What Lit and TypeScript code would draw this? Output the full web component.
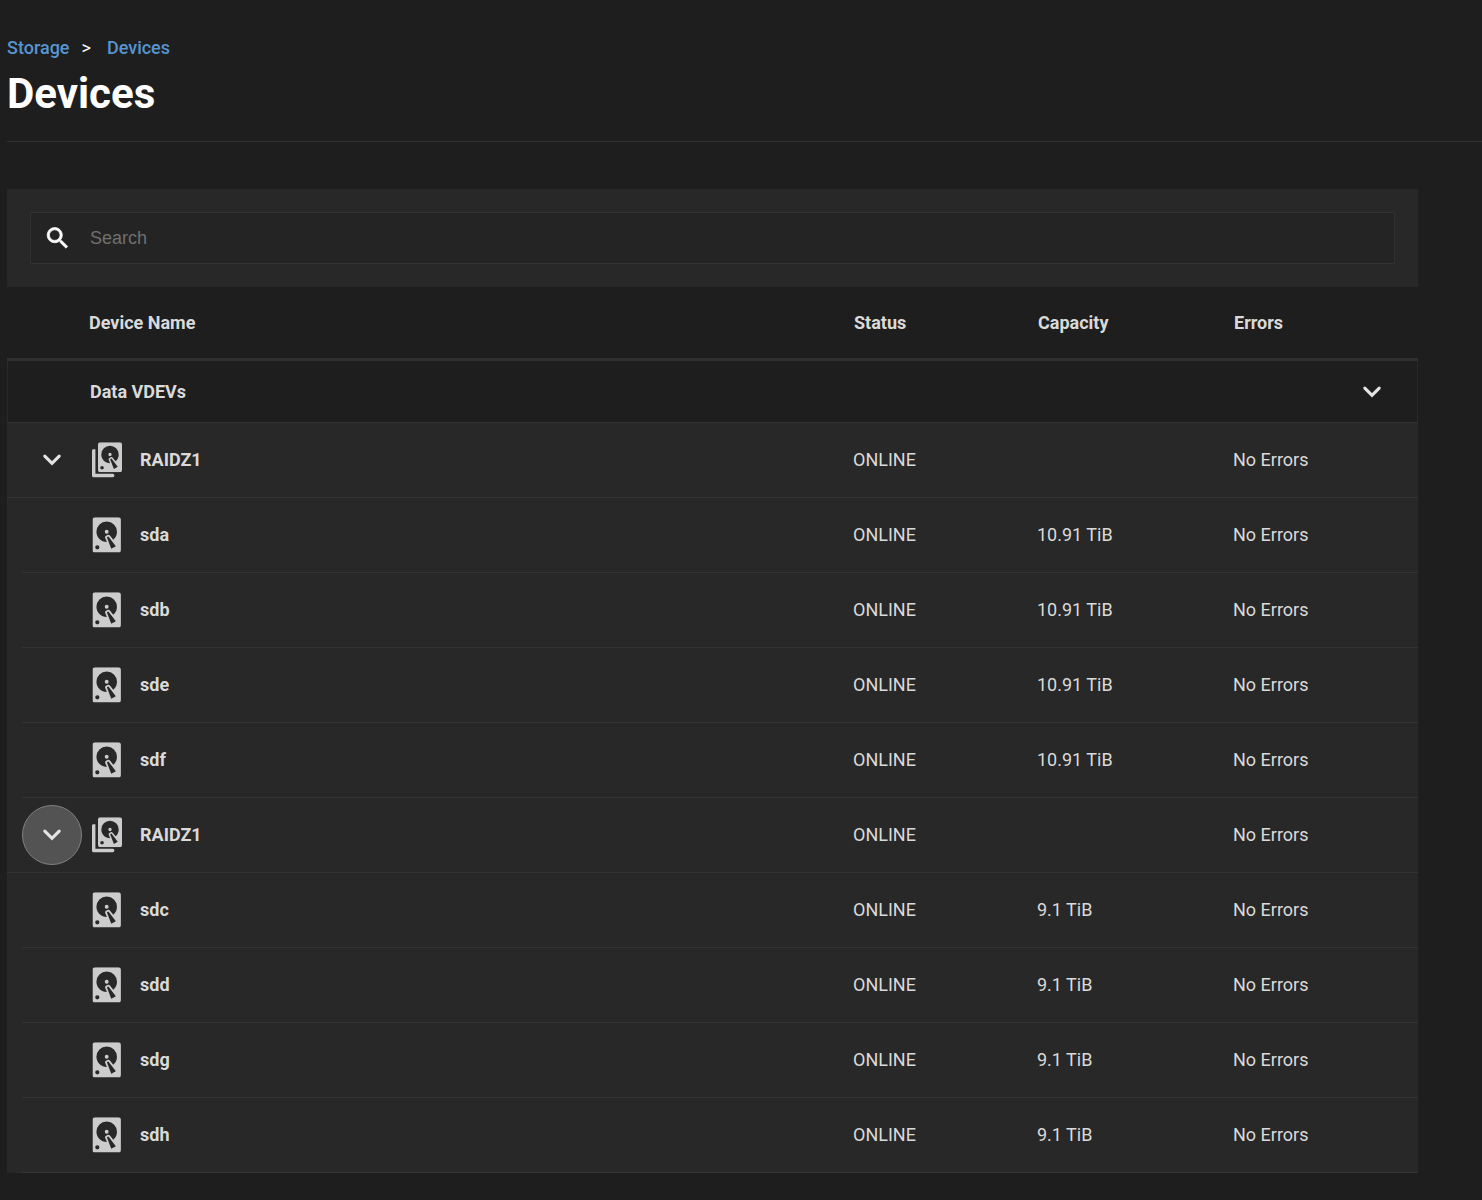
import { LitElement, html, css, svg, nothing } from "lit";
import { customElement, property, state } from "lit/decorators.js";

interface Disk {
  name: string;
  capacity: string;
}

interface Vdev {
  id: number;
  name: string;
  disks: Disk[];
}

const VDEVS: Vdev[] = [
  {
    id: 1,
    name: "RAIDZ1",
    disks: ["sda", "sdb", "sde", "sdf"].map((name) => ({ name, capacity: "10.91 TiB" })),
  },
  {
    id: 2,
    name: "RAIDZ1",
    disks: ["sdc", "sdd", "sdg", "sdh"].map((name) => ({ name, capacity: "9.1 TiB" })),
  },
];

const drive = svg`
  <path fill="currentColor" fill-rule="evenodd"
    d="M5.5 2H18.5A1.5 1.5 0 0 1 20 3.5V20.5A1.5 1.5 0 0 1 18.5 22H5.5A1.5 1.5 0 0 1 4 20.5V3.5A1.5 1.5 0 0 1 5.5 2M12 4.4A5.8 5.8 0 0 0 6.2 10.2C6.2 13.4 8.8 16 12.1 16L11.22 13.87C10.95 13.39 11.11 12.78 11.59 12.5L12.45 12C12.93 11.73 13.54 11.89 13.82 12.37L15.7 14.7C17.1 13.6 17.8 12 17.8 10.2A5.8 5.8 0 0 0 12 4.4M12 9.1A1.1 1.1 0 0 1 12 11.3A1.1 1.1 0 0 1 12 9.1M6.7 17.8A1.2 1.2 0 0 0 6.7 20.2A1.2 1.2 0 0 0 6.7 17.8M12.09 13.37L14.58 19.88L17.17 18.38L12.95 12.87L12.09 13.37Z"/>`;

@customElement("disk-icon")
export class DiskIcon extends LitElement {
  @property({ type: Boolean }) stacked = false;

  static styles = css`
    :host {
      display: block;
      width: 32px;
      height: 36px;
      color: #cccccc;
    }
    .icon {
      display: block;
    }
  `;

  render() {
    return this.stacked
      ? html`<svg class="icon" width="32" height="36" viewBox="0 0 32 36" aria-hidden="true">
          <svg x="8" y="0.2" width="24" height="30" viewBox="4 2 16 20">${drive}</svg>
          <path fill="currentColor" d="M3.4 7.3H5.4V31.8H22.7A1.7 1.7 0 0 1 22.7 35.2H3.4A1.4 1.4 0 0 1 2 33.8V8.7Q2 7.3 3.4 7.3Z" />
        </svg>`
      : html`<svg class="icon" width="32" height="36" viewBox="0 0 32 36" aria-hidden="true">
          <svg x="2.4" y="0.2" width="28.6" height="35.4" viewBox="4 2 16 20">${drive}</svg>
        </svg>`;
  }
}

const chevron = html`<svg class="chevron" width="36" height="36" viewBox="0 0 24 24" aria-hidden="true">
  <path fill="none" stroke="currentColor" stroke-width="2.1" stroke-linecap="round" d="M7.2 9.4 12 14.2l4.8-4.8" />
</svg>`;

@customElement("app-root")
export class AppRoot extends LitElement {
  @state() private groupOpen = true;
  @state() private closed = new Set<number>();
  @state() private query = "";

  static styles = css`
    :host {
      display: block;
      box-sizing: border-box;
      min-height: 100vh;
      padding: 36px 0 24px 7px;
      background: #1e1e1e;
      color: #dadada;
      font: 400 18px/24px Roboto, "Liberation Sans", sans-serif;
    }
    .page-header {
      padding-bottom: 23px;
      border-bottom: 1px solid #303030;
    }
    .crumbs {
      display: flex;
      gap: 12px;
      color: #ffffff;
    }
    .crumbs a {
      color: #5795d1;
      text-decoration: none;
      font-weight: 500;
    }
    .crumbs .last {
      padding-left: 4px;
    }
    .title {
      margin: 10px 0 0;
      color: #ffffff;
      font-size: 42px;
      line-height: 48px;
      font-weight: 700;
    }
    .panel {
      margin: 47px 64px 0 0;
    }
    .search-bar {
      padding: 23px;
      background: #282828;
    }
    .search {
      display: flex;
      align-items: center;
      height: 50px;
      border: 1px solid #313131;
      background: #242424;
      color: #ffffff;
    }
    .search-icon {
      flex: none;
      margin: 0 18px 0 12px;
    }
    .search-input {
      flex: 1;
      min-width: 0;
      height: 100%;
      padding: 0;
      border: 0;
      outline: 0;
      background: transparent;
      color: #ffffff;
      font: 400 18px/24px "Liberation Sans", sans-serif;
    }
    .search-input::placeholder {
      color: #707070;
      opacity: 1;
    }
    .devices {
      width: 100%;
      border-collapse: separate;
      border-spacing: 0;
      table-layout: fixed;
    }
    .devices th,
    .devices td {
      box-sizing: border-box;
      padding: 0;
      text-align: left;
    }
    .devices th {
      font-weight: 700;
    }
    .col-status {
      width: 184px;
    }
    .col-capacity {
      width: 196px;
    }
    .col-errors {
      width: 185px;
    }
    .devices .head th {
      height: 74px;
      padding-left: 1px;
      border-bottom: 3px solid #303030;
    }
    .devices .head .name-head {
      padding-left: 82px;
    }
    .devices .group-name,
    .devices .group-action {
      height: 62px;
      border-bottom: 1px solid #333333;
    }
    .devices .group-name {
      padding-left: 82px;
      border-left: 1px solid #282828;
    }
    .devices .group-action {
      padding-right: 15px;
      border-right: 1px solid #282828;
    }
    .rows td,
    .rows th {
      height: 75px;
      background-color: #282828;
      border-bottom: 1px solid #333333;
    }
    .rows .disk-name {
      border-bottom-color: transparent;
      background-image: linear-gradient(#333333, #333333);
      background-origin: border-box;
      background-position: right bottom;
      background-size: calc(100% - 15px) 1px;
      background-repeat: no-repeat;
    }
    .name-cell {
      display: grid;
      grid-template-columns: 60px 32px 1fr;
      align-items: center;
      padding-left: 15px;
      column-gap: 8px;
    }
    .label {
      padding-left: 10px;
    }
    .toggle {
      display: grid;
      place-items: center;
      box-sizing: border-box;
      width: 60px;
      height: 60px;
      padding: 0;
      border: 1px solid transparent;
      border-radius: 50%;
      background: transparent;
      color: #e4e4e4;
      cursor: pointer;
    }
    .toggle.active {
      border-color: #808080;
      background: #535353;
    }
    .group .toggle {
      margin-left: auto;
    }
    .chevron {
      display: block;
    }
  `;

  private toggleVdev(id: number) {
    const next = new Set(this.closed);
    next.has(id) ? next.delete(id) : next.add(id);
    this.closed = next;
  }

  private renderVdev(vdev: Vdev, last: boolean) {
    const open = !this.closed.has(vdev.id);
    const disks = vdev.disks.filter((d) => d.name.includes(this.query.toLowerCase()));
    return html`
      <tbody class="rows">
        <tr>
          <th scope="row">
            <div class="name-cell">
              <button
                class="toggle ${last ? "active" : ""}"
                type="button"
                aria-label="Toggle ${vdev.name}"
                aria-expanded=${open}
                @click=${() => this.toggleVdev(vdev.id)}
              >${chevron}</button>
              <disk-icon stacked></disk-icon>
              <span class="label">${vdev.name}</span>
            </div>
          </th>
          <td>ONLINE</td>
          <td></td>
          <td>No Errors</td>
        </tr>
        ${open
          ? disks.map(
              (disk) => html`<tr>
                <th class="disk-name" scope="row">
                  <div class="name-cell">
                    <span></span>
                    <disk-icon></disk-icon>
                    <span class="label">${disk.name}</span>
                  </div>
                </th>
                <td>ONLINE</td>
                <td>${disk.capacity}</td>
                <td>No Errors</td>
              </tr>`
            )
          : nothing}
      </tbody>
    `;
  }

  render() {
    return html`
      <header class="page-header">
        <nav class="crumbs" aria-label="Breadcrumb">
          <a href="#storage">Storage</a>
          <span>&gt;</span>
          <a class="last" href="#devices">Devices</a>
        </nav>
        <h1 class="title">Devices</h1>
      </header>
      <main class="panel">
        <div class="search-bar">
          <label class="search">
            <svg class="search-icon" width="29" height="29" viewBox="0 0 24 24" aria-hidden="true">
              <path
                fill="currentColor"
                stroke="currentColor"
                stroke-width="0.6"
                d="M15.5 13.6h-.79l-.28-.27A6.2 6.2 0 0 0 16 9.2 6.3 6.3 0 1 0 9.7 15.5c1.61 0 3.09-.59 4.03-1.47l.27.28v.79l5 4.9L20.4 18.6zm-5.8 0C7.3 13.6 5.3 11.6 5.3 9.2S7.3 4.8 9.7 4.8 14.1 6.8 14.1 9.2 12.1 13.6 9.7 13.6"
              />
            </svg>
            <input
              class="search-input"
              type="text"
              placeholder="Search"
              aria-label="Search"
              @input=${(e: Event) => (this.query = (e.target as HTMLInputElement).value)}
            />
          </label>
        </div>
        <table class="devices">
          <colgroup>
            <col />
            <col class="col-status" />
            <col class="col-capacity" />
            <col class="col-errors" />
          </colgroup>
          <thead class="head">
            <tr>
              <th class="name-head" scope="col">Device Name</th>
              <th scope="col">Status</th>
              <th scope="col">Capacity</th>
              <th scope="col">Errors</th>
            </tr>
          </thead>
          <tbody class="group">
            <tr>
              <th class="group-name" colspan="3" scope="rowgroup">Data VDEVs</th>
              <td class="group-action">
                <button
                  class="toggle"
                  type="button"
                  aria-label="Toggle Data VDEVs"
                  aria-expanded=${this.groupOpen}
                  @click=${() => (this.groupOpen = !this.groupOpen)}
                >${chevron}</button>
              </td>
            </tr>
          </tbody>
          ${this.groupOpen ? VDEVS.map((v, i) => this.renderVdev(v, i === VDEVS.length - 1)) : nothing}
        </table>
      </main>
    `;
  }
}
